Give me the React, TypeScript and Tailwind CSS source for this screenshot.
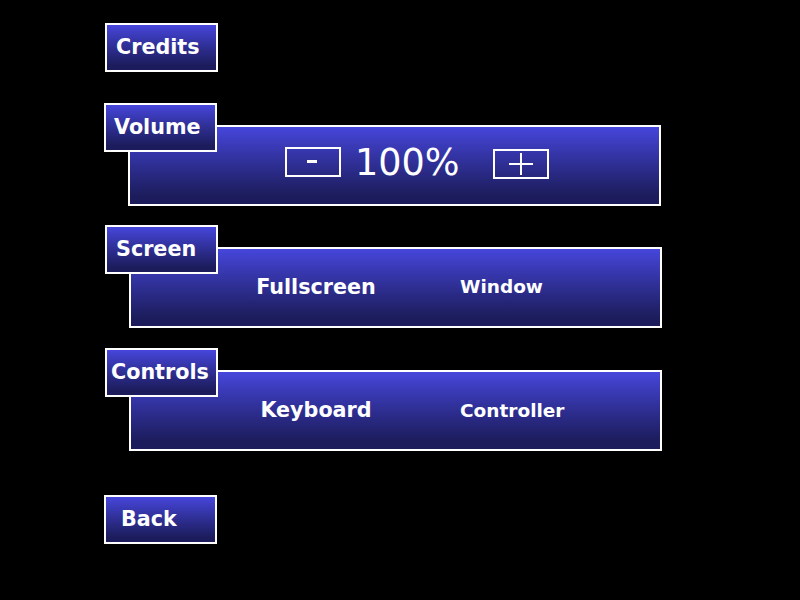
import React from "react";

const grad = "bg-linear-to-b from-[#4646dc] to-[#1c1c5c] to-90%";

function Label({ text, ml, pl }: { text: string; ml: string; pl: string }) {
  return (
    <div
      className={`relative z-10 w-[113px] h-[49px] border-2 border-white ${grad} flex items-center ${ml} ${pl} text-white font-bold text-[20.7px]`}
    >
      {text}
    </div>
  );
}

function OptionPanel({ ml, a, b, bOffset }: { ml: string; a: string; b: string; bOffset?: string }) {
  return (
    <div
      className={`relative w-[533px] h-[81px] -mt-[27px] ${ml} border-2 border-white ${grad} flex items-center text-white font-bold`}
    >
      <div className="w-[370px] flex justify-center text-[20.7px]">
        <span>{a}</span>
      </div>
      <div className={`absolute left-[329px] text-[18.5px] ${bOffset ?? ""}`}>{b}</div>
    </div>
  );
}

export default function App() {
  return (
    <div
      className="w-[800px] h-[600px] bg-black overflow-hidden pt-[23px] flex flex-col items-start"
      style={{ fontFamily: '"DejaVu Sans", Verdana, sans-serif' }}
    >
      <Label text="Credits" ml="ml-[105px]" pl="pl-[9px]" />

      <div className="mt-[31px] flex flex-col items-start">
        <Label text="Volume" ml="ml-[104px]" pl="pl-[8px]" />
        <div
          className={`relative w-[533px] h-[81px] -mt-[27px] ml-[128px] border-2 border-white ${grad} flex items-center text-white`}
        >
          <div className="ml-[155px] mb-[8px] w-[56px] h-[30px] border-2 border-white flex items-center justify-center">
            <div className="w-[10px] h-[3px] bg-white ml-[-2px] mb-[1px]" />
          </div>
          <div className="ml-[14px] mb-[4px] text-[36.6px] leading-none">100%</div>
          <div className="ml-[33px] mb-[4px] w-[56px] h-[30px] border-2 border-white flex items-center justify-center">
            <svg width="24" height="22" viewBox="0 0 24 22">
              <rect x="0" y="10" width="24" height="2" fill="white" />
              <rect x="11" y="0" width="2" height="22" fill="white" />
            </svg>
          </div>
        </div>
      </div>

      <div className="mt-[19px] flex flex-col items-start">
        <Label text="Screen" ml="ml-[105px]" pl="pl-[9px]" />
        <OptionPanel ml="ml-[129px]" a="Fullscreen" b="Window" bOffset="-mt-[2px]" />
      </div>

      <div className="mt-[20px] flex flex-col items-start">
        <Label text="Controls" ml="ml-[105px]" pl="pl-[4px]" />
        <OptionPanel ml="ml-[129px]" a="Keyboard" b="Controller" />
      </div>

      <div className="mt-[44px]">
        <Label text="Back" ml="ml-[104px]" pl="pl-[15px]" />
      </div>
    </div>
  );
}
